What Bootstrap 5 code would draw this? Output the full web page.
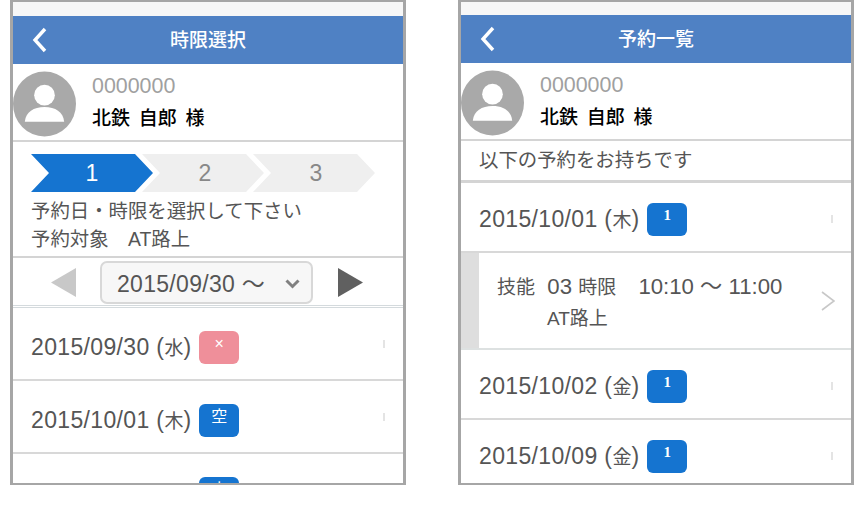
<!DOCTYPE html>
<html lang="ja">
<head>
    <meta charset="UTF-8" />
    <title>予約</title>
    <link href="https://cdn.jsdelivr.net/npm/bootstrap@5.3.0/dist/css/bootstrap.min.css" rel="stylesheet" />
    <style>
        body { background: #fff; font-family: "Liberation Sans", "Noto Sans CJK JP", sans-serif; color: #555; overflow: hidden; }
        .page-wrap { padding-left: 10px; gap: 52px; width: 866px; height: 485px; }
        .phone { width: 396px; height: 485px; border: 3px solid #a6a6a6; border-top-width: 2px; border-bottom-width: 2px; overflow: hidden; flex: none; }
        .phone > * { flex: none; }
        .top-strip { height: 14px; background: #f7f7f7; }
        .phone-b .top-strip { height: 13px; }
        .app-bar { height: 48px; background: #4f81c4; color: #fff; font-size: 19px; font-weight: 500; position: relative; padding-top: 2px; }
        .app-bar svg { position: absolute; left: 19px; top: 11px; }
        .profile { height: 78px; border-bottom: 2px solid #d4d4d4; }
        .avatar { width: 63px; height: 66px; flex: none; margin-top: 3px; }
        .member-no { color: #a0a0a0; font-size: 21.4px; line-height: 28px; }
        .member-name { color: #000; font-size: 19px; font-weight: 500; line-height: 34px; word-spacing: 3.5px; margin-top: 2px; }
        .profile-text { margin-left: 16px; padding-top: 3px; }
        .step-area { height: 116px; padding: 12px 0 0 18px; font-size: 19.4px; border-bottom: 2px solid #d4d4d4; }
        .step-item { width: 122px; height: 38px; background: #efefef; color: #888; font-size: 23px; margin-right: -11px; padding-left: 4px; clip-path: polygon(0 0, 104px 0, 122px 50%, 104px 100%, 0 100%, 18px 50%); }
        .step-item.on { background: #1574d0; color: #fff; padding-left: 0; }
        .step-note { margin-top: 5px; line-height: 28px; }
        .week-nav { height: 50px; border-bottom: 3px double #d4dadd; padding: 2px 0 0 38px; }
        .date-pick { width: 213px; height: 43px; background: #f7f7f7; border: 2px solid #d8d8d8; border-radius: 7px; font-size: 23px; letter-spacing: .3px; padding: 3px 11px 0 15px; margin: 0 25px 0 24px; justify-content: space-between; }
        .date-row { height: 73px; border-bottom: 2px solid #d8d8d8; padding: 7px 0 0 18px; font-size: 23px; letter-spacing: .35px; position: relative; }
        .kanji { font-size: 19px; letter-spacing: 0; }
        .slot-tag { width: 40px; height: 33px; border-radius: 6px; color: #fff; font-size: 16px; line-height: 26px; text-align: center; margin-left: 8px; flex: none; }
        .slot-open { background: #1574d0; }
        .slot-full { background: #ef8f9a; }
        .slot-num { font-family: "Liberation Serif", serif; font-weight: 700; font-size: 15px; line-height: 25px; }
        .row-tick { position: absolute; right: 18px; top: 32px; width: 2px; height: 8px; background: #e4e4e4; }
        .intro-line { height: 42px; padding-left: 18px; font-size: 19.4px; border-bottom: 3px solid #d4d4d4; }
        .detail-row { height: 97px; border-bottom: 2px solid #dde1e1; font-size: 22.2px; line-height: 30px; position: relative; }
        .detail-bar { width: 18px; height: 100%; background: #dedede; flex: none; }
        .detail-text { padding-left: 18px; }
        .detail-block { padding-top: 4px; }
        .detail-sub { padding-left: 68px; }
        .detail-arrow { position: absolute; right: 16px; top: 38px; }
        .row-b1 { height: 70px; padding-top: 4px; }
    </style>
</head>
<body>
<div class="d-flex page-wrap">

    <!-- left phone: slot selection -->
    <div class="phone phone-a d-flex flex-column">
        <div class="top-strip"></div>
        <div class="app-bar d-flex align-items-center justify-content-center">
            <svg width="16" height="26" viewBox="0 0 16 26"><path d="M13 2 3 13l10 11" fill="none" stroke="#fff" stroke-width="3.4"/></svg>
            時限選択
        </div>
        <div class="profile d-flex align-items-center">
            <svg class="avatar" viewBox="0 0 64 66"><ellipse cx="32" cy="33" rx="32" ry="33" fill="#a9a9a9"/><circle cx="32" cy="24" r="10.5" fill="#fff"/><path d="M12 51c1-10 9-15 20-15s19 5 20 15z" fill="#fff"/></svg>
            <div class="profile-text">
                <div class="member-no">0000000</div>
                <div class="member-name">北鉄 自郎 様</div>
            </div>
        </div>
        <div class="step-area">
            <div class="d-flex">
                <div class="step-item on d-flex align-items-center justify-content-center">1</div>
                <div class="step-item d-flex align-items-center justify-content-center">2</div>
                <div class="step-item d-flex align-items-center justify-content-center">3</div>
            </div>
            <div class="step-note">予約日・時限を選択して下さい<br>予約対象　AT路上</div>
        </div>
        <div class="week-nav d-flex align-items-center">
            <svg width="25" height="30" viewBox="0 0 25 30"><path d="M25 0v29L0 14.500z" fill="#c8c8c8"/></svg>
            <div class="date-pick d-flex align-items-center">
                <span>2015/09/30 ～</span>
                <svg width="15" height="10" viewBox="0 0 15 10"><path d="M1.500 1.500 7.500 7.500l6-6" fill="none" stroke="#808080" stroke-width="3"/></svg>
            </div>
            <svg width="25" height="30" viewBox="0 0 25 30"><path d="M0 0v29l25-14.500z" fill="#606060"/></svg>
        </div>
        <div class="date-row d-flex align-items-center">
            <span>2015/09/30 (<span class="kanji">水</span>)</span>
            <div class="slot-tag slot-full">×</div>
            <div class="row-tick"></div>
        </div>
        <div class="date-row d-flex align-items-center">
            <span>2015/10/01 (<span class="kanji">木</span>)</span>
            <div class="slot-tag slot-open">空</div>
            <div class="row-tick"></div>
        </div>
        <div class="date-row d-flex align-items-center">
            <span class="invisible">2015/10/02 (<span class="kanji">金</span>)</span>
            <div class="slot-tag slot-open">空</div>
        </div>
    </div>

    <!-- right phone: booking list -->
    <div class="phone phone-b d-flex flex-column">
        <div class="top-strip"></div>
        <div class="app-bar d-flex align-items-center justify-content-center">
            <svg width="16" height="26" viewBox="0 0 16 26"><path d="M13 2 3 13l10 11" fill="none" stroke="#fff" stroke-width="3.4"/></svg>
            予約一覧
        </div>
        <div class="profile d-flex align-items-center">
            <svg class="avatar" viewBox="0 0 64 66"><ellipse cx="32" cy="33" rx="32" ry="33" fill="#a9a9a9"/><circle cx="32" cy="24" r="10.5" fill="#fff"/><path d="M12 51c1-10 9-15 20-15s19 5 20 15z" fill="#fff"/></svg>
            <div class="profile-text">
                <div class="member-no">0000000</div>
                <div class="member-name">北鉄 自郎 様</div>
            </div>
        </div>
        <div class="intro-line d-flex align-items-center">以下の予約をお持ちです</div>
        <div class="date-row row-b1 d-flex align-items-center">
            <span>2015/10/01 (<span class="kanji">木</span>)</span>
            <div class="slot-tag slot-open slot-num">1</div>
            <div class="row-tick"></div>
        </div>
        <div class="detail-row d-flex align-items-center">
            <div class="detail-bar"></div>
            <div class="detail-block">
                <div class="detail-text"><span class="kanji">技能</span>&nbsp; 03 <span class="kanji">時限</span>　10:10 ～ 11:00</div>
                <div class="detail-sub detail-text"><span class="kanji">AT路上</span></div>
            </div>
            <svg class="detail-arrow" width="14" height="20" viewBox="0 0 14 20"><path d="M1 1 13 10 1 19" fill="none" stroke="#c8c8c8" stroke-width="1.600"/></svg>
        </div>
        <div class="date-row row-b1 d-flex align-items-center">
            <span>2015/10/02 (<span class="kanji">金</span>)</span>
            <div class="slot-tag slot-open slot-num">1</div>
            <div class="row-tick"></div>
        </div>
        <div class="date-row row-b1 d-flex align-items-center">
            <span>2015/10/09 (<span class="kanji">金</span>)</span>
            <div class="slot-tag slot-open slot-num">1</div>
            <div class="row-tick"></div>
        </div>
    </div>
</div>
<script src="https://cdn.jsdelivr.net/npm/bootstrap@5.3.0/dist/js/bootstrap.bundle.min.js"></script>
</body>
</html>
